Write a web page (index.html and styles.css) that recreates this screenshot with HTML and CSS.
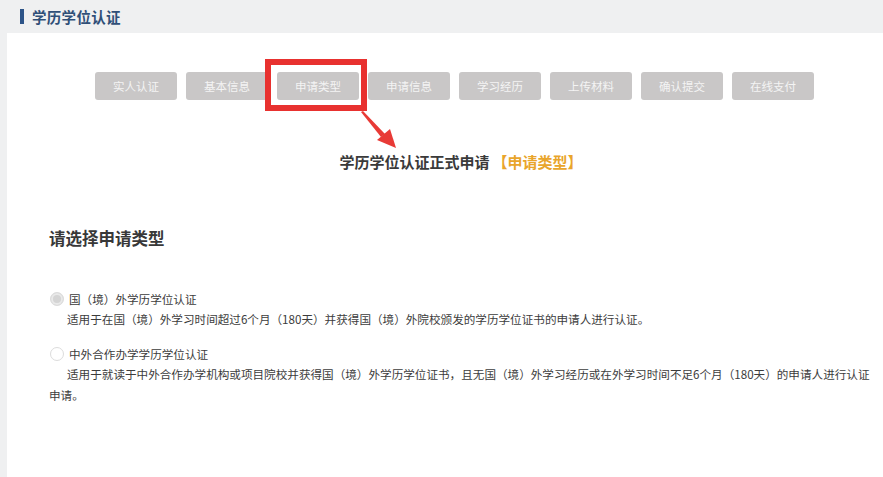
FILE: index.html
```html
<!DOCTYPE html>
<html lang="zh-CN">
<head>
  <meta charset="UTF-8">
  <title>学历学位认证</title>
  <link rel="stylesheet" href="styles.css">
</head>
<body>
  <div class="page-head">
    <span class="head-bar"></span>
    <span class="head-title">学历学位认证</span>
  </div>

  <div class="card">
    <div class="steps">
      <button class="step-btn">实人认证</button>
      <button class="step-btn">基本信息</button>
      <button class="step-btn current">申请类型</button>
      <button class="step-btn">申请信息</button>
      <button class="step-btn">学习经历</button>
      <button class="step-btn">上传材料</button>
      <button class="step-btn">确认提交</button>
      <button class="step-btn">在线支付</button>
    </div>

    <svg class="mark-arrow" width="50" height="50" viewBox="0 0 50 50">
      <polygon points="0,1 2,0 24,23 20,26" fill="#e83a36"/>
      <polygon points="35,37 16,29 29,18" fill="#e83a36"/>
    </svg>

    <h2 class="form-title">学历学位认证正式申请<span class="form-step">【申请类型】</span></h2>

    <h3 class="section-title">请选择申请类型</h3>

    <div class="options">
      <div class="option">
        <label class="option-label"><span class="radio checked"></span>国（境）外学历学位认证</label>
        <p class="option-desc">适用于在国（境）外学习时间超过6个月（180天）并获得国（境）外院校颁发的学历学位证书的申请人进行认证。</p>
      </div>
      <div class="option">
        <label class="option-label"><span class="radio"></span>中外合作办学学历学位认证</label>
        <p class="option-desc">适用于就读于中外合作办学机构或项目院校并获得国（境）外学历学位证书，且无国（境）外学习经历或在外学习时间不足6个月（180天）的申请人进行认证申请。</p>
      </div>
    </div>
  </div>
</body>
</html>
```

FILE: styles.css
```css
body {
  margin: 0;
  background-color: #eff0f1;
  font-family: "Microsoft YaHei", "Noto Sans CJK SC", sans-serif;
  color: #333;
  overflow: hidden;
}
.page-head {
  height: 33px;
  display: flex;
  align-items: center;
  padding-left: 20px;
  box-sizing: border-box;
}
.head-bar {
  width: 4px;
  height: 15px;
  background-color: #2d5488;
  margin-right: 8px;
}
.head-title {
  font-size: 14.5px;
  font-weight: bold;
  color: #2f4f78;
  letter-spacing: 0.3px;
}
.card {
  position: relative;
  margin-left: 7px;
  background-color: #fff;
  min-height: 444px;
  padding: 39px 8px 40px 42px;
  box-sizing: border-box;
}
.steps {
  display: flex;
  gap: 9px;
  padding-left: 46px;
}
.step-btn {
  position: relative;
  width: 82px;
  height: 28px;
  border: none;
  border-radius: 3px;
  background-color: #c9c7c7;
  color: #f4f4f4;
  font-family: inherit;
  font-size: 11.5px;
  padding: 0;
}
.step-btn.current::after {
  content: "";
  position: absolute;
  left: -12px;
  top: -13px;
  width: 90px;
  height: 40px;
  border: 6px solid #e8312f;
}
.mark-arrow {
  position: absolute;
  left: 354px;
  top: 78px;
}
.form-title {
  margin: 51px 0 0 0;
  text-align: center;
  font-size: 15px;
  font-weight: bold;
  color: #3a3a3a;
  padding-right: 2px;
}
.form-step {
  color: #e9a52b;
  margin-left: 3px;
}
.section-title {
  margin: 54px 0 0 0;
  font-size: 16.5px;
  font-weight: bold;
  color: #383838;
}
.options {
  margin-top: 39px;
  display: flex;
  flex-direction: column;
  gap: 14px;
}
.option-label {
  display: flex;
  align-items: center;
  font-size: 11.6px;
  color: #3c3c3c;
  height: 20px;
}
.radio {
  width: 12px;
  height: 12px;
  border: 1px solid #dcdcdc;
  border-radius: 50%;
  background-color: #fff;
  margin-right: 5px;
  margin-left: 1px;
}
.radio.checked {
  background-color: #d4d4d4;
  box-shadow: inset 0 0 0 2px #e9e9e9;
}
.option-desc {
  margin: 0;
  text-indent: 18px;
  font-size: 11.6px;
  line-height: 21px;
  color: #3c3c3c;
}
```
